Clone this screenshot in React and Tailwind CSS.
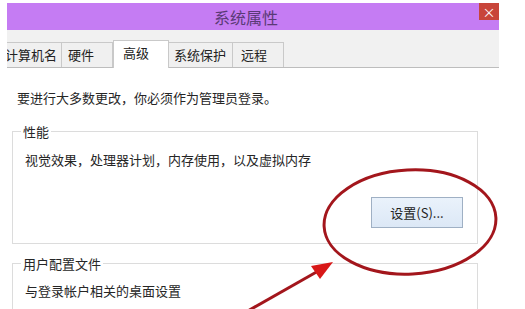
import React from "react";

const font = { fontFamily: '"Noto Sans CJK SC", "Noto Sans", sans-serif' };

function Tab({ label, w, pl, selected }) {
  if (selected) {
    return (
      <div
        className={`${w} ${pl} relative z-10 -mb-px flex h-[28px] items-center border border-b-0 border-[#c9c9c9] bg-white pb-[3px] text-[13px] text-[#222]`}
      >
        {label}
      </div>
    );
  }
  return (
    <div
      className={`${w} ${pl} -ml-px flex h-[25px] items-center border border-b-0 border-[#c9c9c9] bg-[#f0f0f0] text-[13px] text-[#222]`}
    >
      {label}
    </div>
  );
}

export default function App() {
  return (
    <div className="relative h-[309px] w-[525px] overflow-hidden bg-white" style={font}>
      <div className="ml-[7px] pt-[3px] w-[492px] overflow-hidden">
        {/* Title bar */}
        <div className="relative flex h-[27px] items-center justify-center bg-[#c57cf3]">
          <span className="mr-[14px] text-[16px] leading-none text-[#5a3a76]">系统属性</span>
          <div className="absolute right-0 top-0 flex h-[17px] w-[20px] items-center justify-center bg-[#c8453a] text-[13px] leading-none text-white">
            ×
          </div>
        </div>
        {/* Tab strip */}
        <div className="flex h-[38px] items-end border-b border-[#bdbdbd] bg-[#f1f1f1]">
          <div className="-ml-[5px] flex items-end">
            <Tab label="计算机名" w="w-[61px]" pl="pl-[3px]" />
            <Tab label="硬件" w="w-[52px]" pl="pl-[6px]" />
            <Tab label="高级" w="w-[56px]" pl="pl-[9px]" selected />
            <Tab label="系统保护" w="w-[65px]" pl="pl-[5px]" />
            <Tab label="远程" w="w-[52px]" pl="pl-[8px]" />
          </div>
        </div>
        {/* Body */}
        <div className="bg-white pt-[20px] text-[13px] leading-[19px] text-[#262626]">
          <div className="pl-[10px]">要进行大多数更改，你必须作为管理员登录。</div>
          <fieldset className="ml-[5px] mt-[15px] w-[466px] border border-[#dcdcdc] px-[12px] pb-[15px]">
            <legend className="ml-[-4px] px-[2px] leading-[19px]">性能</legend>
            <div className="mt-[9px]">视觉效果，处理器计划，内存使用，以及虚拟内存</div>
            <div className="mt-[28px] flex justify-end pr-[2px]">
              <button className="flex h-[31px] w-[92px] items-center justify-center border border-[#9fb0c4] bg-gradient-to-b from-[#eaf2fb] to-[#dce8f6] text-[13px] text-[#222]">
                设置(S)...
              </button>
            </div>
          </fieldset>
          <fieldset className="ml-[5px] mt-[10px] w-[466px] border border-[#dcdcdc] px-[12px] pb-[15px]">
            <legend className="ml-[-4px] px-[2px] leading-[19px]">用户配置文件</legend>
            <div className="mt-[8px]">与登录帐户相关的桌面设置</div>
          </fieldset>
        </div>
      </div>
      {/* Annotation overlay */}
      <svg className="pointer-events-none absolute left-0 top-0" width="525" height="309" viewBox="0 0 525 309">
        <ellipse cx="410" cy="222" rx="86" ry="52" transform="rotate(-3 410 222)" fill="none" stroke="#a3161c" strokeWidth="3" />
        <line x1="246" y1="312" x2="320" y2="270" stroke="#a3161c" strokeWidth="3" />
        <polygon points="333,262 311,266 320,279" fill="#d81818" />
      </svg>
    </div>
  );
}
